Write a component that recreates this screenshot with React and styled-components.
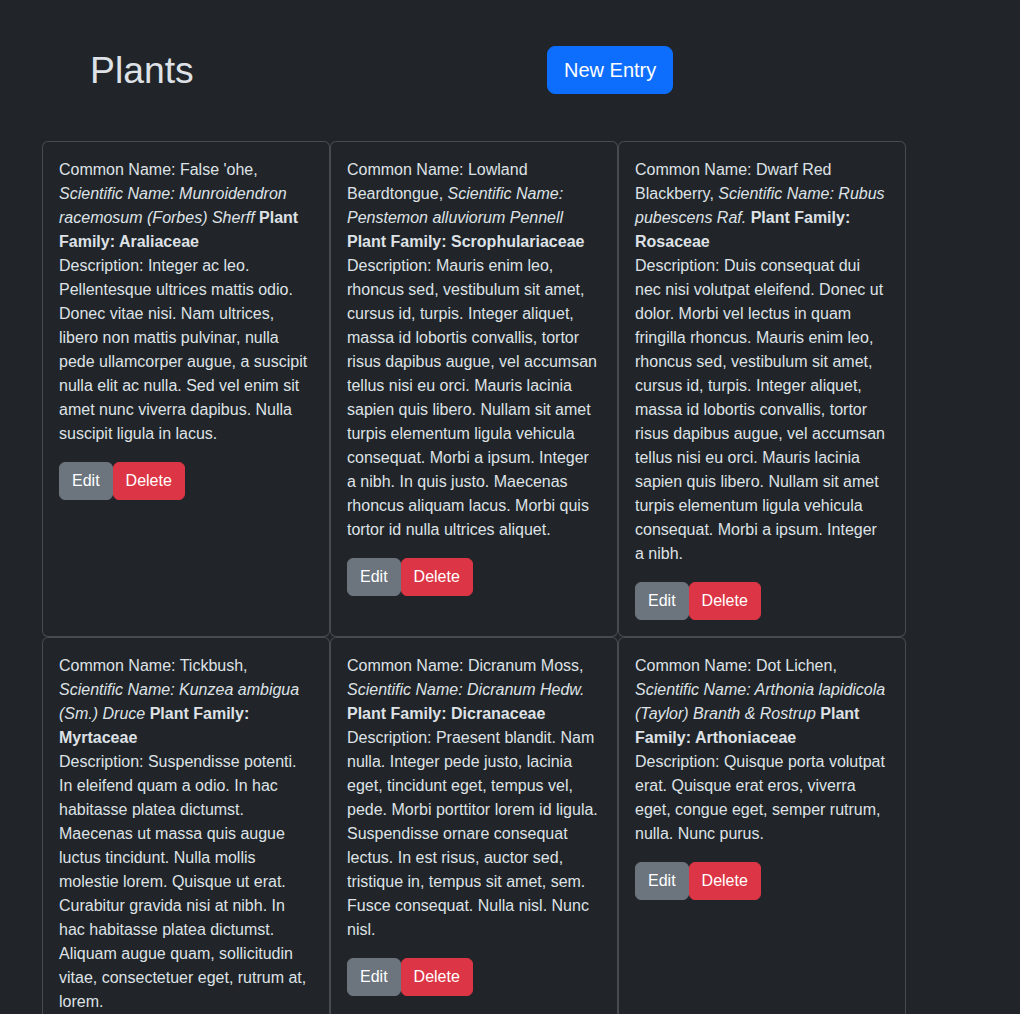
import React from 'react';
import styled, { createGlobalStyle, css } from 'styled-components';

const GlobalStyle = createGlobalStyle`
  html, body {
    margin: 0;
    padding: 0;
    background: #212529;
  }
  body {
    color: #dee2e6;
    font-family: "Liberation Sans", Arial, sans-serif;
    font-size: 16px;
    line-height: 1.5;
  }
  * {
    box-sizing: border-box;
  }
`;

const Container = styled.div`
  width: 960px;
  margin: 0 auto;
  padding: 0 12px;
`;

const Header = styled.header`
  display: grid;
  grid-template-columns: 505px auto;
  align-items: center;
  padding-top: 46px;
`;

const Title = styled.h1`
  margin: 0;
  padding-left: 48px;
  font-size: 37.3px;
  font-weight: 500;
  line-height: 1.2;
  color: #dee2e6;
`;

const Button = styled.button`
  display: inline-block;
  font-family: inherit;
  color: #fff;
  border: 1px solid transparent;
  cursor: pointer;
  font-size: 16px;
  line-height: 1.5;
  padding: 6px 12px;
  border-radius: 6px;
  ${props => props.variant === 'primary' && css`
    background: #0d6efd;
    border-color: #0d6efd;
  `}
  ${props => props.variant === 'secondary' && css`
    background: #6c757d;
    border-color: #6c757d;
  `}
  ${props => props.variant === 'danger' && css`
    background: #dc3545;
    border-color: #dc3545;
  `}
  ${props => props.large && css`
    font-size: 20px;
    padding: 8px 16px;
    border-radius: 8px;
  `}
`;

const NewButton = styled(Button)`
  justify-self: start;
`;

const CardGrid = styled.div`
  display: flex;
  flex-wrap: wrap;
  align-items: stretch;
  margin-top: 47px;
`;

const Card = styled.div`
  width: 288px;
  border: 1px solid rgba(255, 255, 255, 0.175);
  border-radius: 6px;
  padding: 16px;
  background: #212529;
`;

const Summary = styled.div``;

const Description = styled.p`
  margin: 0 0 16px;
`;

const Actions = styled.div`
  display: flex;
`;

const plants = [
  {
    common: "False 'ohe",
    scientific: 'Munroidendron racemosum (Forbes) Sherff',
    family: 'Araliaceae',
    description: 'Integer ac leo. Pellentesque ultrices mattis odio. Donec vitae nisi. Nam ultrices, libero non mattis pulvinar, nulla pede ullamcorper augue, a suscipit nulla elit ac nulla. Sed vel enim sit amet nunc viverra dapibus. Nulla suscipit ligula in lacus.',
  },
  {
    common: 'Lowland Beardtongue',
    scientific: 'Penstemon alluviorum Pennell',
    family: 'Scrophulariaceae',
    description: 'Mauris enim leo, rhoncus sed, vestibulum sit amet, cursus id, turpis. Integer aliquet, massa id lobortis convallis, tortor risus dapibus augue, vel accumsan tellus nisi eu orci. Mauris lacinia sapien quis libero. Nullam sit amet turpis elementum ligula vehicula consequat. Morbi a ipsum. Integer a nibh. In quis justo. Maecenas rhoncus aliquam lacus. Morbi quis tortor id nulla ultrices aliquet.',
  },
  {
    common: 'Dwarf Red Blackberry',
    scientific: 'Rubus pubescens Raf.',
    family: 'Rosaceae',
    description: 'Duis consequat dui nec nisi volutpat eleifend. Donec ut dolor. Morbi vel lectus in quam fringilla rhoncus. Mauris enim leo, rhoncus sed, vestibulum sit amet, cursus id, turpis. Integer aliquet, massa id lobortis convallis, tortor risus dapibus augue, vel accumsan tellus nisi eu orci. Mauris lacinia sapien quis libero. Nullam sit amet turpis elementum ligula vehicula consequat. Morbi a ipsum. Integer a nibh.',
  },
  {
    common: 'Tickbush',
    scientific: 'Kunzea ambigua (Sm.) Druce',
    family: 'Myrtaceae',
    description: 'Suspendisse potenti. In eleifend quam a odio. In hac habitasse platea dictumst. Maecenas ut massa quis augue luctus tincidunt. Nulla mollis molestie lorem. Quisque ut erat. Curabitur gravida nisi at nibh. In hac habitasse platea dictumst. Aliquam augue quam, sollicitudin vitae, consectetuer eget, rutrum at, lorem.',
  },
  {
    common: 'Dicranum Moss',
    scientific: 'Dicranum Hedw.',
    family: 'Dicranaceae',
    description: 'Praesent blandit. Nam nulla. Integer pede justo, lacinia eget, tincidunt eget, tempus vel, pede. Morbi porttitor lorem id ligula. Suspendisse ornare consequat lectus. In est risus, auctor sed, tristique in, tempus sit amet, sem. Fusce consequat. Nulla nisl. Nunc nisl.',
  },
  {
    common: 'Dot Lichen',
    scientific: 'Arthonia lapidicola (Taylor) Branth & Rostrup',
    family: 'Arthoniaceae',
    description: 'Quisque porta volutpat erat. Quisque erat eros, viverra eget, congue eget, semper rutrum, nulla. Nunc purus.',
  },
];

const PlantCard = ({ plant }) => (
  <Card>
    <Summary>
      Common Name: {plant.common}, <i>Scientific Name: {plant.scientific}</i>{' '}
      <b>Plant Family: {plant.family}</b>
    </Summary>
    <Description>Description: {plant.description}</Description>
    <Actions>
      <Button variant="secondary">Edit</Button>
      <Button variant="danger">Delete</Button>
    </Actions>
  </Card>
);

const App = () => (
  <>
    <GlobalStyle />
    <Container>
      <Header>
        <Title>Plants</Title>
        <NewButton variant="primary" large>New Entry</NewButton>
      </Header>
      <CardGrid>
        {plants.map(p => (
          <PlantCard key={p.common} plant={p} />
        ))}
      </CardGrid>
    </Container>
  </>
);

export default App;
